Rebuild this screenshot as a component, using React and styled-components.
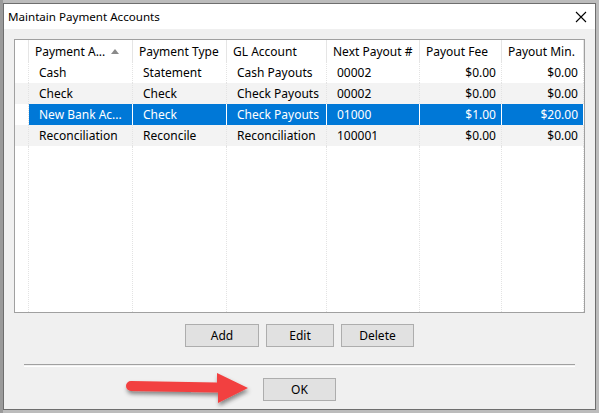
import React from "react";
import styled, { createGlobalStyle } from "styled-components";

const GlobalStyle = createGlobalStyle`
  html, body {
    margin: 0;
    padding: 0;
    background: #bcbcbc;
    font-family: "Noto Sans", "Open Sans", sans-serif;
    font-size: 12px;
    color: #000;
  }
`;

const Screen = styled.div`
  width: 599px;
  height: 413px;
  padding: 3px 0 0 3px;
  box-sizing: border-box;
  background: linear-gradient(to right, #9a9a9a 0 3px, #bcbcbc 3px);
  overflow: hidden;
`;

const Window = styled.div`
  position: relative;
  width: 593px;
  height: 407px;
  box-sizing: border-box;
  border: 1px solid #6e6e6e;
  background: #f0f0f0;
  display: flex;
  flex-direction: column;
`;

const TitleBar = styled.div`
  height: 25px;
  background: #fff;
  display: flex;
  align-items: center;
  justify-content: space-between;
  padding: 0 8px 0 4px;
  font-size: 11.6px;
`;

const Body = styled.div`
  flex: 1;
  padding: 10px 10px 0 10px;
  display: flex;
  flex-direction: column;
  align-items: center;
`;

const List = styled.div`
  width: 571px;
  height: 274px;
  box-sizing: border-box;
  border: 1px solid #a0a0a0;
  background: #fff;
  position: relative;
  overflow: hidden;
`;

const COLS = "14px 104px 94px 100px 93px 82px 82px";

const HeaderRow = styled.div`
  display: grid;
  grid-template-columns: ${COLS};
  height: 22px;
  background: #fff;
`;

const HeaderCell = styled.div`
  display: flex;
  align-items: center;
  padding: 1px 0 0 6px;
  border-right: 1px solid #e5e5e5;
  white-space: nowrap;
  overflow: hidden;
  gap: 6px;
`;

const SortArrow = styled.span`
  width: 0;
  height: 0;
  border-left: 4px solid transparent;
  border-right: 4px solid transparent;
  border-bottom: 5px solid #8a8a8a;
`;

const Row = styled.div`
  display: grid;
  grid-template-columns: ${COLS};
  height: 21px;
  background: ${(p) => (p.$alt ? "#f3f3f3" : "#fff")};
`;

const Cell = styled.div`
  display: flex;
  align-items: center;
  justify-content: ${(p) => (p.$right ? "flex-end" : "flex-start")};
  padding: 0 5px 0 10px;
  white-space: nowrap;
  overflow: hidden;
  color: ${(p) => (p.$sel ? "#fff" : "#000")};
  background: ${(p) => (p.$sel ? "#0078d7" : "transparent")};
  border-right: 1px ${(p) => (p.$sel ? "solid #fff" : "dotted #e3e3e3")};
`;

const Gutter = styled.div`
  border-right: 1px dotted #e3e3e3;
`;

const Filler = styled.div`
  display: grid;
  grid-template-columns: ${COLS};
  height: 200px;
`;

const ButtonRow = styled.div`
  display: flex;
  gap: 7px;
  margin-top: 11px;
`;

const Button = styled.button`
  width: ${(p) => p.$w || 73}px;
  height: 23px;
  box-sizing: border-box;
  background: #e1e1e1;
  border: 1px solid #adadad;
  font-family: inherit;
  font-size: 12px;
  color: #000;
  padding: 0;
`;

const Separator = styled.div`
  width: 551px;
  height: 1px;
  border-top: 1px solid #a0a0a0;
  border-bottom: 1px solid #fff;
  margin-top: 17px;
`;

const Footer = styled.div`
  margin-top: 11px;
  display: flex;
  justify-content: center;
`;

const Arrow = styled.svg`
  position: absolute;
  left: 118px;
  top: 366px;
  overflow: visible;
`;

const CloseIcon = () => (
  <svg width="12" height="12" viewBox="0 0 12 12">
    <path d="M1 1 L11 11 M11 1 L1 11" stroke="#000" strokeWidth="1.1" />
  </svg>
);

const rows = [
  ["Cash", "Statement", "Cash Payouts", "00002", "$0.00", "$0.00"],
  ["Check", "Check", "Check Payouts", "00002", "$0.00", "$0.00"],
  ["New Bank Ac...", "Check", "Check Payouts", "01000", "$1.00", "$20.00"],
  ["Reconciliation", "Reconcile", "Reconciliation", "100001", "$0.00", "$0.00"],
];

export default function App() {
  return (
    <>
      <GlobalStyle />
      <Screen>
        <Window>
          <TitleBar>
            <span>Maintain Payment Accounts</span>
            <CloseIcon />
          </TitleBar>
          <Body>
            <List>
              <HeaderRow>
                <HeaderCell />
                <HeaderCell>
                  Payment A... <SortArrow />
                </HeaderCell>
                <HeaderCell>Payment Type</HeaderCell>
                <HeaderCell>GL Account</HeaderCell>
                <HeaderCell>Next Payout #</HeaderCell>
                <HeaderCell>Payout Fee</HeaderCell>
                <HeaderCell>Payout Min.</HeaderCell>
              </HeaderRow>
              {rows.map((r, i) => {
                const sel = i === 2;
                return (
                  <Row key={i} $alt={i % 2 === 1}>
                    <Gutter />
                    {r.map((v, j) => (
                      <Cell key={j} $sel={sel} $right={j >= 4}>
                        {v}
                      </Cell>
                    ))}
                  </Row>
                );
              })}
              <Filler>
                <Gutter />
                <Gutter />
                <Gutter />
                <Gutter />
                <Gutter />
                <Gutter />
                <Gutter />
              </Filler>
            </List>
            <ButtonRow>
              <Button $w={74}>Add</Button>
              <Button $w={68}>Edit</Button>
              <Button $w={73}>Delete</Button>
            </ButtonRow>
            <Separator />
            <Footer>
              <Button $w={73}>OK</Button>
            </Footer>
          </Body>
          <Arrow width="132" height="40" viewBox="0 0 132 40">
            <defs>
              <filter id="sh" x="-20%" y="-50%" width="140%" height="200%">
                <feDropShadow dx="1" dy="3" stdDeviation="2" floodColor="#000" floodOpacity="0.45" />
              </filter>
            </defs>
            <g filter="url(#sh)">
              <path
                d="M9 11 L95 12.5 L95 3 L126 18 L96 33 L96 22.5 L9 21 A5 5 0 0 1 9 11 Z"
                fill="#f2403f"
              />
            </g>
          </Arrow>
        </Window>
      </Screen>
    </>
  );
}
